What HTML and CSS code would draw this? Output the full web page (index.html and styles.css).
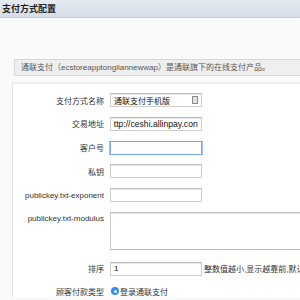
FILE: index.html
```html
<!DOCTYPE html>
<html>
	<head>
		<meta charset="UTF-8">
		<title>支付方式配置</title>
		<link rel="stylesheet" href="styles.css">
	</head>
	<body>
		<div class="head">支付方式配置</div>
		<div class="main">
			<div class="notice">通联支付（ecstoreapptonglian­newwap）是通联旗下的在线支付产品。</div>
			<div class="panel">
				<div class="row">
					<label>支付方式名称</label>
					<div class="field">
						<input type="text" value="通联支付手机版">
						<span class="lang"></span>
					</div>
				</div>
				<div class="row">
					<label>交易地址</label>
					<input type="text" class="scrolled" value="http://ceshi.allinpay.con">
				</div>
				<div class="row">
					<label>客户号</label>
					<input type="text" class="focus" value="">
				</div>
				<div class="row">
					<label>私钥</label>
					<input type="text" value="">
				</div>
				<div class="row">
					<label>publickey.txt-exponent</label>
					<input type="text" value="">
				</div>
				<div class="row row-area">
					<label>publickey.txt-modulus</label>
					<textarea></textarea>
				</div>
				<div class="row">
					<label>排序</label>
					<input type="text" value="1">
					<span class="hint">整数值越小,显示越靠前,默认</span>
				</div>
				<div class="row">
					<label>顾客付款类型</label>
					<span class="radio"></span>
					<span class="opt">登录通联支付</span>
				</div>
			</div>
		</div>
	</body>
</html>
```

FILE: styles.css
```css
* {
	margin: 0;
	padding: 0;
	border: none;
	box-sizing: border-box;
}
html, body {
	width: 300px;
	height: 300px;
	overflow: hidden;
}
body {
	background: #fafafa;
	font-family: "Liberation Sans", "Noto Sans CJK SC", sans-serif;
	font-size: 8px;
	color: #333;
}

.head {
	height: 18px;
	line-height: 18px;
	padding-left: 2px;
	font-size: 9px;
	font-weight: bold;
	color: #222;
	background: linear-gradient(#e6ebf1, #d6dde7);
	border-bottom: 1px solid #c8cfd9;
}

.main {
	padding: 41px 0 0 12px;
}

.notice {
	width: 286px;
	height: 17px;
	line-height: 15px;
	margin-left: 2px;
	padding-left: 6px;
	white-space: nowrap;
	color: #555;
	background: #efefef;
	border: 1px solid #d8d8d8;
	border-right: none;
}

.panel {
	width: 288px;
	margin-top: 6px;
	padding-top: 9px;
	background: #fff;
	border-top: 2px solid #ececec;
	border-left: 1px solid #e4e4e4;
	display: flex;
	flex-direction: column;
	gap: 9.8px;
}

.row {
	display: flex;
	align-items: center;
	white-space: nowrap;
	overflow: hidden;
}
.row label {
	width: 91px;
	flex: none;
	text-align: right;
	margin-right: 6px;
	color: #333;
}
.row-area {
	align-items: flex-start;
	margin-bottom: 2.2px;
}
.row-area label {
	padding-top: 2px;
}

input, textarea {
	width: 92px;
	height: 14px;
	flex: none;
	padding: 0 3px;
	font-family: "Liberation Sans", "Noto Sans CJK SC", sans-serif;
	font-size: 8px;
	color: #111;
	background: #fff;
	border: 1px solid #cfcfcf;
	border-top-color: #bdbdbd;
	box-shadow: inset 0 1px 1px #e6e6e6;
	outline: none;
}
textarea {
	width: 240px;
	height: 38px;
	resize: none;
	border-color: #bdbdbd #bdbdbd #bdbdbd #cfcfcf;
}
input.scrolled {
	font-size: 8.6px;
	text-indent: -5px;
}
input.focus {
	border: 1px solid #78a6e6;
	box-shadow: 0 0 1px 1px #a9c7f0;
	caret-color: #000;
}

.field {
	position: relative;
}
.lang {
	position: absolute;
	right: 4px;
	top: 3px;
	width: 6px;
	height: 8px;
	border: 1px solid #8a8a8a;
	background: #e2e2e2;
}

.hint {
	margin-left: 2px;
	color: #333;
}

.radio {
	width: 8px;
	height: 8px;
	border-radius: 50%;
	background: #2f8ff0;
	position: relative;
	flex: none;
	margin-left: 1px;
}
.radio:after {
	content: "";
	position: absolute;
	left: 2.5px;
	top: 2.5px;
	width: 3px;
	height: 3px;
	border-radius: 50%;
	background: #fff;
}
.opt {
	margin-left: 1px;
}
```
